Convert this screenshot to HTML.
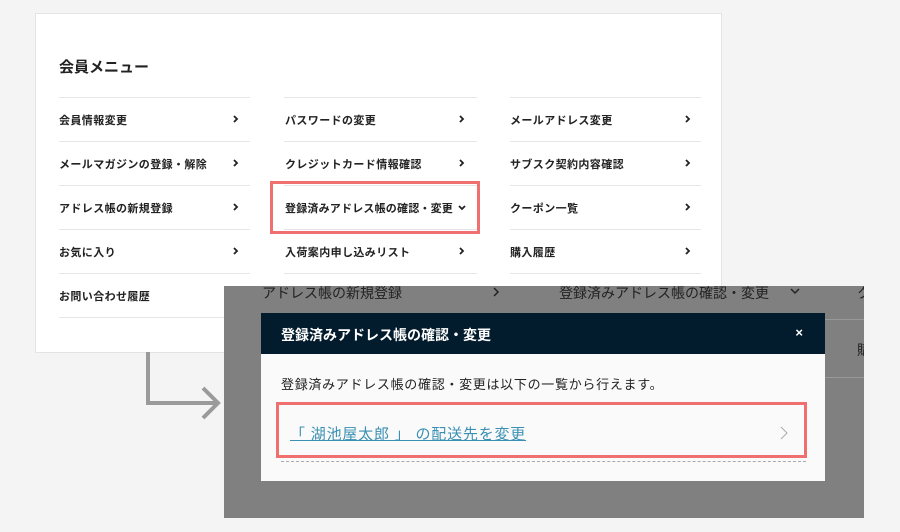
<!DOCTYPE html>
<html><head><meta charset="utf-8"><style>
*{margin:0;padding:0;box-sizing:border-box}
body{width:900px;height:532px;background:#f4f4f4;position:relative;overflow:hidden;font-family:"Liberation Sans","Noto Sans CJK JP",sans-serif;color:#222}
.panel{position:absolute;left:35px;top:13px;width:687px;height:340px;background:#fff;border:1px solid #e4e4e4}
.t{position:absolute;font-weight:bold;font-size:11px;white-space:nowrap;letter-spacing:0.4px}
.ln{position:absolute;height:1px;background:#e6e6e6}
.ov{position:absolute;left:224px;top:286px;width:640px;height:232px;background:#808080;overflow:hidden}
.modal{position:absolute;left:261px;top:313px;width:564px;height:168px;background:#fafafa}
.mh{height:41px;background:#021b2d;color:#fff;font-weight:bold;font-size:14px;padding:12px 0 0 20px;position:relative}
</style></head><body>
<div class="panel"></div>
<div class="t" style="left:59px;top:56px;font-size:15px;letter-spacing:0">会員メニュー</div>
<div class="ln" style="left:59px;top:97px;width:191px"></div>
<div class="ln" style="left:59px;top:141px;width:191px"></div>
<div class="ln" style="left:59px;top:185px;width:191px"></div>
<div class="ln" style="left:59px;top:229px;width:191px"></div>
<div class="ln" style="left:59px;top:273px;width:191px"></div>
<div class="ln" style="left:59px;top:317px;width:191px"></div>
<div class="ln" style="left:284px;top:97px;width:193px"></div>
<div class="ln" style="left:284px;top:141px;width:193px"></div>
<div class="ln" style="left:284px;top:185px;width:193px"></div>
<div class="ln" style="left:284px;top:229px;width:193px"></div>
<div class="ln" style="left:284px;top:273px;width:193px"></div>
<div class="ln" style="left:510px;top:97px;width:191px"></div>
<div class="ln" style="left:510px;top:141px;width:191px"></div>
<div class="ln" style="left:510px;top:185px;width:191px"></div>
<div class="ln" style="left:510px;top:229px;width:191px"></div>
<div class="ln" style="left:510px;top:273px;width:191px"></div>

<div class="t" style="left:59px;top:112px">会員情報変更</div>
<div class="t" style="left:59px;top:156px">メールマガジンの登録・解除</div>
<div class="t" style="left:59px;top:200px">アドレス帳の新規登録</div>
<div class="t" style="left:59px;top:244px">お気に入り</div>
<div class="t" style="left:59px;top:288px">お問い合わせ履歴</div>

<div class="t" style="left:285px;top:112px">パスワードの変更</div>
<div class="t" style="left:285px;top:156px">クレジットカード情報確認</div>
<div class="t" style="left:285px;top:200px;letter-spacing:0.2px">登録済みアドレス帳の確認・変更</div>
<div class="t" style="left:285px;top:244px">入荷案内申し込みリスト</div>

<div class="t" style="left:510px;top:112px">メールアドレス変更</div>
<div class="t" style="left:510px;top:156px">サブスク契約内容確認</div>
<div class="t" style="left:510px;top:200px">クーポン一覧</div>
<div class="t" style="left:510px;top:244px">購入履歴</div>

<svg style="position:absolute;left:0;top:0" width="900" height="532" fill="none" stroke="#222" stroke-width="1.8">
<path d="M234 116l3 3-3 3M234 160l3 3-3 3M234 204l3 3-3 3M234 248l3 3-3 3"/>
<path d="M460 116l3 3-3 3M460 160l3 3-3 3M459 206l3 3 3-3M460 248l3 3-3 3"/>
<path d="M686 116l3 3-3 3M686 160l3 3-3 3M686 204l3 3-3 3M686 248l3 3-3 3"/>
</svg>

<div style="position:absolute;left:270px;top:181px;width:210px;height:53px;border:3px solid #f07070"></div>

<svg style="position:absolute;left:140px;top:350px" width="90" height="75"><path d="M8 2 V53 H78 M63 38 L78 53 L63 68" fill="none" stroke="#9a9a9a" stroke-width="4"/></svg>

<div class="ov">
 <div class="t" style="left:38px;top:-3px;font-size:14px;font-weight:normal;color:#222;letter-spacing:0">アドレス帳の新規登録</div>
 <svg style="position:absolute;left:268px;top:0" width="10" height="12" fill="none" stroke="#222" stroke-width="1.5"><path d="M2 2l4 4-4 4"/></svg>
 <div class="t" style="left:335px;top:-3px;font-size:14px;font-weight:normal;color:#222;letter-spacing:0">登録済みアドレス帳の確認・変更</div>
 <svg style="position:absolute;left:565px;top:0" width="12" height="10" fill="none" stroke="#222" stroke-width="1.5"><path d="M2 3l4 4 4-4"/></svg>
 <div class="t" style="left:633px;top:-3px;font-size:14px;font-weight:normal;color:#222">ク</div>
 <div style="position:absolute;left:601px;top:33px;width:40px;height:1px;background:#999"></div>
 <div class="t" style="left:633px;top:54px;font-size:14px;font-weight:normal;color:#222">購</div>
 <div style="position:absolute;left:601px;top:91px;width:40px;height:1px;background:#999"></div>
 <div class="t" style="left:55px;top:228px;font-size:16px;color:#222">マイページ</div>
</div>

<div class="modal">
 <div class="mh">登録済みアドレス帳の確認・変更<span style="position:absolute;right:22px;top:12px;font-size:13px">×</span></div>
 <div style="position:absolute;left:20px;top:61px;font-size:13px;color:#222;letter-spacing:0.7px;white-space:nowrap">登録済みアドレス帳の確認・変更は以下の一覧から行えます。</div>
 <div style="position:absolute;left:29px;top:110px;font-size:15px;color:#3a90b3;text-decoration:underline;letter-spacing:0.8px;white-space:nowrap">「 湖池屋太郎 」 の配送先を変更</div>
 <svg style="position:absolute;left:518px;top:113px" width="10" height="14" fill="none" stroke="#aaa" stroke-width="1"><path d="M2 1l6 6-6 6"/></svg>
 <div style="position:absolute;left:20px;top:148px;width:525px;border-top:1px dashed #aaa"></div>
</div>
<div style="position:absolute;left:276px;top:402px;width:531px;height:56px;border:3px solid #f07070"></div>
</body></html>
